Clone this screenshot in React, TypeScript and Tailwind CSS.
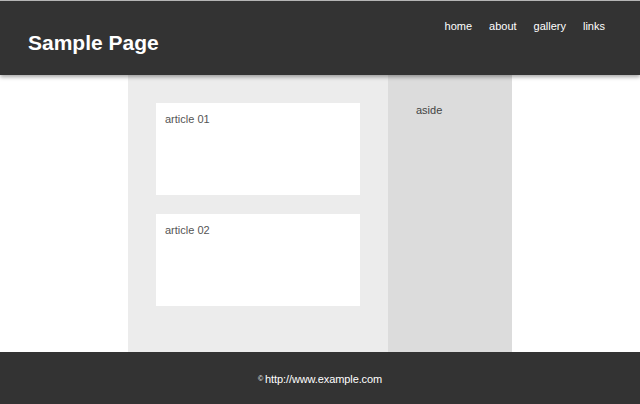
import React from 'react'

const navItems = ['home', 'about', 'gallery', 'links']
const articles = ['article 01', 'article 02']

const App: React.FC = () => {
    return (
        <div className="min-h-[404px] flex flex-col bg-white font-['Liberation_Sans',Arial,sans-serif]">
            {/* header */}
            <header className="relative z-10 h-[75px] border-t border-[#b5b5b5] bg-[#333333] shadow-[0_2px_4px_rgba(0,0,0,0.35)] flex justify-between">
                <h1 className="pl-[28px] pt-[30px] text-[21px] font-bold text-white leading-6">Sample Page</h1>
                <nav className="pr-[35px] pt-[17px] flex gap-[17px] text-[11px] text-white leading-4">
                    {navItems.map((item) => (
                        <a key={item} href="#">{item}</a>
                    ))}
                </nav>
            </header>

            {/* main */}
            <div className="flex justify-center">
                <main className="w-[260px] bg-[#ececec] px-[28px] pt-[28px] pb-[46px] flex flex-col gap-[19px]">
                    {articles.map((title) => (
                        <article key={title} className="h-[92px] bg-white px-[9px] pt-[8px] text-[11px] text-[#555] leading-4">
                            {title}
                        </article>
                    ))}
                </main>
                <aside className="w-[124px] bg-[#dcdcdc] px-[28px] pt-[27px] text-[11px] text-[#444] leading-4">
                    aside
                </aside>
            </div>

            {/* footer */}
            <footer className="h-[52px] bg-[#333333] flex items-center justify-center text-[11px] text-white pt-[2px]">
                <span className="text-[7px] mr-[2px]">©</span>
                <span className="tracking-[-0.1px]">http://www.example.com</span>
            </footer>
        </div>
    )
}

export default App
